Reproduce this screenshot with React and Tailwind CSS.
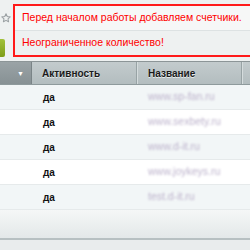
import React from "react";

const rows = [
  { active: "да", name: "www.sp-fan.ru" },
  { active: "да", name: "www.sexbety.ru" },
  { active: "да", name: "www.d-it.ru" },
  { active: "да", name: "www.joykeys.ru" },
  { active: "да", name: "test.d-it.ru" },
];

function Star() {
  return (
    <svg width="10" height="10" viewBox="0 0 24 24" fill="none" stroke="#9aa0a3" strokeWidth="2.5" strokeLinejoin="round">
      <path d="M12 2l3 6.5 7 .8-5.2 4.8 1.4 7L12 17.6 5.8 21.1l1.4-7L2 9.3l7-.8z" />
    </svg>
  );
}

export default function App() {
  return (
    <div
      className="w-[250px] h-[250px] overflow-hidden bg-[#eef1f1] flex flex-col"
      style={{ fontFamily: '"Liberation Sans", Arial, sans-serif' }}
    >
      {/* top strip with notice */}
      <div className="h-[61px] flex pt-[4px]">
        <div className="w-[13px] flex flex-col items-start">
          <div className="h-[9px]" />
          <div className="pl-[1px]">
            <Star />
          </div>
          <div className="mt-[16px] w-[5px] h-[18px] bg-gradient-to-b from-[#a2c23a] to-[#7e9d17] rounded-r-[2px]" />
        </div>
        <div className="flex-1 h-[53px] border-2 border-[#ff1a1a] border-r-0 flex flex-col text-[10.5px] text-[#f00]">
          <div className="h-[25px] bg-[#f6f7f7] border-b border-[#dde2e3] flex items-center pl-[7px] whitespace-nowrap">
            Перед началом работы добавляем счетчики.
          </div>
          <div className="flex-1 bg-[#eef1f1] flex items-center pl-[7px] whitespace-nowrap">
            Неограниченное количество!
          </div>
        </div>
      </div>

      {/* table header */}
      <div className="h-[24px] flex border-t border-[#8c9597] border-b border-b-[#8e9a9c] bg-gradient-to-b from-[#c3cbcd] to-[#b3bdbf] text-[10px] font-bold text-[#1a1a1a]">
        <div className="w-[32px] bg-gradient-to-b from-[#9aa3a6] to-[#879194] flex items-center justify-end pr-[7px] border-r border-[#7a8487]">
          <span className="text-white text-[7px] leading-none">▼</span>
        </div>
        <div className="w-[105px] flex items-center pl-[10px] border-r border-[#98a3a5] [text-shadow:0_1px_0_#e6ecec]">
          Активность
        </div>
        <div className="w-[105px] flex items-center pl-[10px] border-l border-l-[#d5dcdd] border-r border-[#98a3a5] [text-shadow:0_1px_0_#e6ecec]">
          Название
        </div>
        <div className="flex-1 border-l border-l-[#d5dcdd]" />
      </div>

      {/* rows */}
      <div className="flex flex-col">
        {rows.map((r, i) => (
          <div
            key={i}
            className={`h-[25px] flex items-center border-b border-[#e6eaeb] ${
              i % 2 === 0 ? "bg-[#f2f6f7]" : "bg-white"
            }`}
          >
            <div className="w-[43px]" />
            <div className="w-[105px] text-[10px] font-bold text-[#111]">{r.active}</div>
            <div className="text-[10.5px] text-[#bcb2cb] blur-[1.1px]">{r.name}</div>
          </div>
        ))}
      </div>

      {/* footer */}
      <div className="h-[30px] bg-gradient-to-b from-[#f5f7f7] to-[#e3e8e9] border-b-2 border-[#b7c0c2]" />
      <div className="flex-1 bg-[#e9eced]" />
    </div>
  );
}
